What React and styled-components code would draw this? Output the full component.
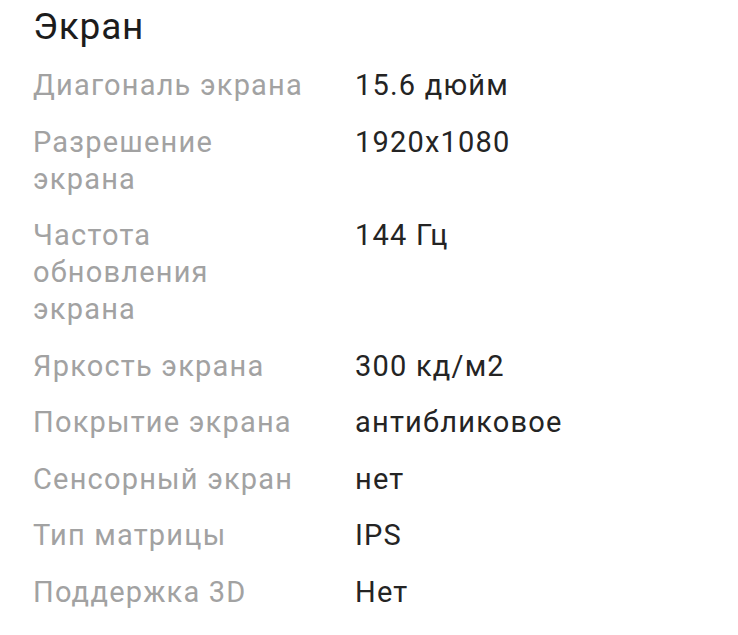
import React from 'react';
import styled, { createGlobalStyle } from 'styled-components';

const specs = [
  { label: 'Диагональ экрана', value: '15.6 дюйм' },
  { label: 'Разрешение экрана', value: '1920x1080' },
  { label: 'Частота обновления экрана', value: '144 Гц' },
  { label: 'Яркость экрана', value: '300 кд/м2' },
  { label: 'Покрытие экрана', value: 'антибликовое' },
  { label: 'Сенсорный экран', value: 'нет' },
  { label: 'Тип матрицы', value: 'IPS' },
  { label: 'Поддержка 3D', value: 'Нет' },
];

const GlobalStyle = createGlobalStyle`
  body {
    margin: 0;
    background: #fff;
    font-family: Roboto, 'Noto Sans', sans-serif;
  }
`;

const Section = styled.section`
  padding: 5px 0 0 33px;
`;

const Title = styled.h2`
  margin: 0 0 18px;
  font-size: 37px;
  line-height: 44px;
  font-weight: 400;
  letter-spacing: 0.8px;
  color: #1c1c1c;
`;

const List = styled.dl`
  margin: 0;
  display: grid;
  grid-template-columns: 280px 1fr;
  column-gap: 42px;
  row-gap: 19.5px;
  font-size: 29px;
  line-height: 37px;
  letter-spacing: 1.2px;
`;

const Label = styled.dt`
  color: #a2a2a2;
`;

const Value = styled.dd`
  margin: 0;
  color: #242424;
`;

export default function App() {
  return (
    <>
      <GlobalStyle />
      <Section>
        <Title>Экран</Title>
        <List>
          {specs.map((item) => (
            <React.Fragment key={item.label}>
              <Label>{item.label}</Label>
              <Value>{item.value}</Value>
            </React.Fragment>
          ))}
        </List>
      </Section>
    </>
  );
}
